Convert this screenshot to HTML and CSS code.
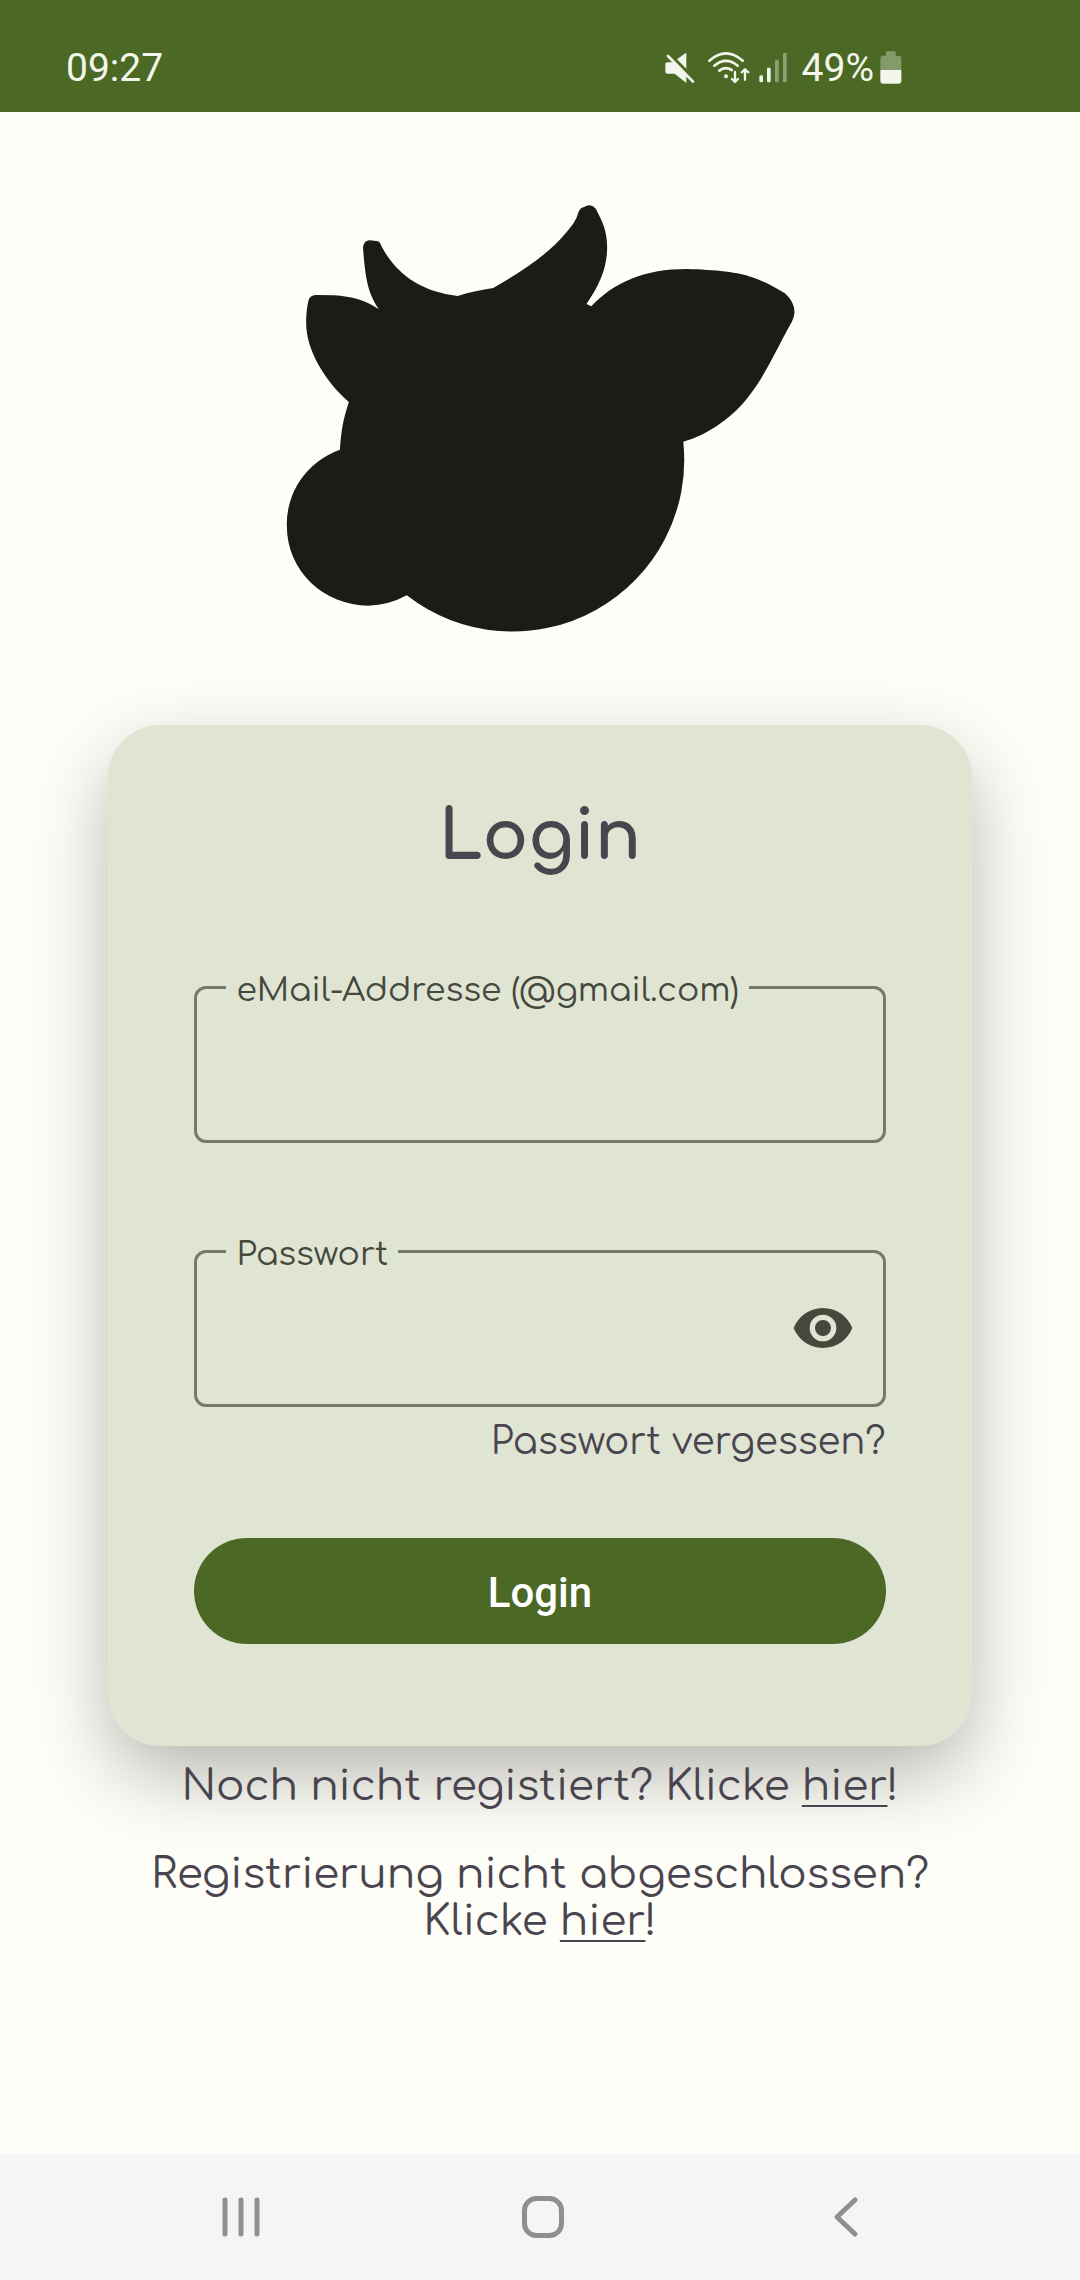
FILE: index.html
```html
<!DOCTYPE html>
<html lang="de">
<head>
<meta charset="utf-8">
<meta name="viewport" content="width=device-width, initial-scale=1">
<title>Login</title>
<link rel="stylesheet" href="styles.css">
</head>
<body>
<div class="screen">
  <header class="status">
    <span class="status-text">09:27</span>
    <div class="status-icons">
      <svg width="37" height="34" viewBox="75 63 111 102" aria-hidden="true">
        <path fill="currentColor" d="M82 97H99L139 137V159L104 131H82Q76 131 76 125V103Q76 97 82 97ZM139 70V116L111 88L134 71Q138 68 139 70Z"/>
        <path stroke="currentColor" stroke-width="8" stroke-linecap="round" d="M84 78L159 155"/>
      </svg>
      <svg width="44" height="34" viewBox="204 63 132 102" fill="none" stroke="currentColor" stroke-width="8" stroke-linecap="round" stroke-linejoin="round" aria-hidden="true">
        <path d="M208 92Q258 48 308 92M223 107Q258 78 293 107M238 122Q256 108 275 120"/>
        <path stroke-width="7" d="M285 126V155M276 147L285 156L294 147M315 149V119M305 127L315 118L325 127"/>
        <circle cx="258" cy="139" r="6" fill="currentColor" stroke="none"/>
      </svg>
      <svg width="38" height="34" viewBox="354 63 114 102" fill="currentColor" aria-hidden="true">
        <rect x="358" y="136" width="11" height="21" rx="4"/>
        <rect x="381" y="113" width="11" height="44" rx="4"/>
        <rect x="405" y="90" width="11" height="67" rx="4" opacity=".4"/>
        <rect x="429" y="68" width="11" height="89" rx="4" opacity=".4"/>
      </svg>
      <span class="status-text">49%</span>
      <svg width="22" height="34" viewBox="719 63 66 102" fill="currentColor" aria-hidden="true">
        <path opacity=".35" d="M720 120V86Q720 77 729 77H737V68Q737 64 741 64H762Q766 64 766 68V77H774Q783 77 783 86V120Z"/>
        <path d="M720 120H783V152Q783 161 774 161H729Q720 161 720 152Z"/>
      </svg>
    </div>
  </header>

  <main class="content">
    <svg class="logo" viewBox="0 0 540 460" role="img" aria-label="Kuh">
      <path transform="scale(.3444 .3333)" fill="#1c1c17" d="M203 779C207 720 212 690 229 636C160 575 105 480 105 400C105 370 108 345 113 328Q118 316 132 315L185 316C240 320 275 330 316 358C285 310 277 270 270 172Q273 150 291 151L313 154C322 158 322 168 327 175C370 255 440 305 545 318C580 305 615 300 648 294C740 240 810 190 862 125C885 98 890 85 896 65Q903 52 912 51Q930 38 946 56C965 95 978 120 979 170C979 230 960 280 919 342L933 349C1000 275 1090 237 1210 237C1290 239 1365 247 1400 262C1440 275 1470 295 1495 310Q1522 335 1523 365Q1522 385 1510 405C1480 460 1440 550 1400 605C1350 680 1270 735 1200 755A499 515 0 0 1 397 1216A236 237 0 0 1 285 1247A236 237 0 0 1 49 1010A236 237 0 0 1 203 779Z"/>
    </svg>

    <section class="card">
      <h1 class="title">Login</h1>
      <form class="form">
        <fieldset class="field">
          <legend class="field-legend"><label for="email">eMail-Addresse (@gmail.com)</label></legend>
          <input class="field-input" id="email" type="email">
        </fieldset>
        <fieldset class="field">
          <legend class="field-legend"><label for="password">Passwort</label></legend>
          <input class="field-input" id="password" type="password">
          <button class="eye" type="button" aria-label="Passwort anzeigen">
            <svg width="64" height="64" viewBox="0 0 24 24" fill="currentColor" aria-hidden="true">
              <path d="M12 9a3 3 0 0 0 0 6a3 3 0 0 0 0-6m0 8a5 5 0 0 1 0-10a5 5 0 0 1 0 10m0-12.500C7 4.500 2.730 7.610 1 12c1.730 4.390 6 7.500 11 7.500s9.270-3.110 11-7.500c-1.730-4.390-6-7.500-11-7.500"/>
            </svg>
          </button>
        </fieldset>
        <a class="forgot" href="#passwort">Passwort vergessen?</a>
        <button class="submit" type="submit">Login</button>
      </form>
    </section>

    <div class="notes">
      <p class="note">Noch nicht registiert? Klicke <a class="link" href="#registrieren">hier</a>!</p>
      <p class="note">Registrierung nicht abgeschlossen? Klicke <a class="link" href="#abschliessen">hier</a>!</p>
    </div>
  </main>

  <nav class="nav">
    <button class="nav-button" type="button" aria-label="Letzte Apps">
      <svg width="48" height="48" viewBox="0 0 48 48" fill="none" stroke="currentColor" stroke-width="5" stroke-linecap="round" aria-hidden="true"><path d="M8 7V41M24 7V41M40 7V41"/></svg>
    </button>
    <button class="nav-button" type="button" aria-label="Startseite">
      <svg width="48" height="48" viewBox="0 0 48 48" fill="none" stroke="currentColor" stroke-width="5" aria-hidden="true"><rect x="5.500" y="5.500" width="37" height="37" rx="12"/></svg>
    </button>
    <button class="nav-button" type="button" aria-label="Zurück">
      <svg width="48" height="48" viewBox="0 0 48 48" fill="none" stroke="currentColor" stroke-width="5" stroke-linecap="round" stroke-linejoin="round" aria-hidden="true"><path d="M34 7L16 24L34 41"/></svg>
    </button>
  </nav>
</div>
</body>
</html>
```
FILE: styles.css
```css
* {
  box-sizing: border-box;
}

body {
  margin: 0;
  background: #fefdf7;
  color: #49454f;
  font-family: Comfortaa, Lato, "Open Sans", sans-serif;
}

button {
  border: 0;
  padding: 0;
  background: none;
  cursor: pointer;
}

svg {
  display: block;
}

.screen {
  display: flex;
  flex-direction: column;
  min-height: 100vh;
}

/* Status bar */
.status {
  display: flex;
  align-items: center;
  justify-content: space-between;
  height: 112px;
  padding: 24px 178px 0 66px;
  background: #4b6924;
  color: #f2f6ec;
}

.status-text {
  font-family: Roboto, sans-serif;
  font-size: 39px;
  line-height: 48px;
}

.status-icons {
  display: flex;
  align-items: center;
  gap: 6px;
}

/* Content */
.content {
  flex: 1;
  display: flex;
  flex-direction: column;
  align-items: center;
  padding-top: 78px;
}

.logo {
  width: 50%;
}

.card {
  width: 80%;
  margin-top: 75px;
  padding: 64px 8% 102px;
  border-radius: 52px;
  background: #e0e4d3;
  box-shadow: 0 30px 80px -4px rgba(0, 0, 0, 0.3);
}

.title {
  margin: 0 0 82px;
  font-size: 68px;
  font-weight: 700;
  line-height: 96px;
  text-align: center;
}

.form {
  display: flex;
  flex-direction: column;
}

.field {
  display: flex;
  align-items: center;
  min-width: 0;
  height: 176px;
  margin: 0;
  padding: 0 28px 0 29px;
  border: 3px solid #76796b;
  border-radius: 12px;
}

.field + .field {
  margin-top: 88px;
}

.field-legend {
  padding: 8px 10px 0;
  color: #45483d;
  font-size: 33px;
  line-height: 32px;
}

.field-input {
  flex: 1;
  min-width: 0;
  height: 133px;
  padding: 0 12px;
  border: 0;
  outline: 0;
  background: none;
  color: #1c1c17;
  font: inherit;
  font-size: 42px;
}

.eye {
  margin-bottom: 20px;
  color: #45483d;
}

.forgot {
  align-self: flex-end;
  margin-top: 11px;
  color: inherit;
  font-size: 37px;
  line-height: 48px;
  text-decoration: none;
}

.submit {
  height: 106px;
  margin-top: 72px;
  padding-top: 2px;
  border-radius: 53px;
  background: #4b6924;
  color: #fff;
  font-family: Roboto, sans-serif;
  font-size: 42px;
  font-weight: 500;
}

.notes {
  display: flex;
  flex-direction: column;
  gap: 41px;
  width: 80%;
  margin-top: 17px;
}

.note {
  margin: 0;
  font-size: 42px;
  line-height: 47px;
  text-align: center;
}

.link {
  color: inherit;
  text-decoration-thickness: 2px;
  text-underline-offset: 5px;
}

/* System navigation */
.nav {
  display: grid;
  grid-template-columns: repeat(3, 1fr);
  height: 126px;
  padding: 0 84px 0 90px;
  background: #f5f5f5;
}

.nav-button {
  display: grid;
  place-items: center;
  color: #8f8f8f;
}
```
